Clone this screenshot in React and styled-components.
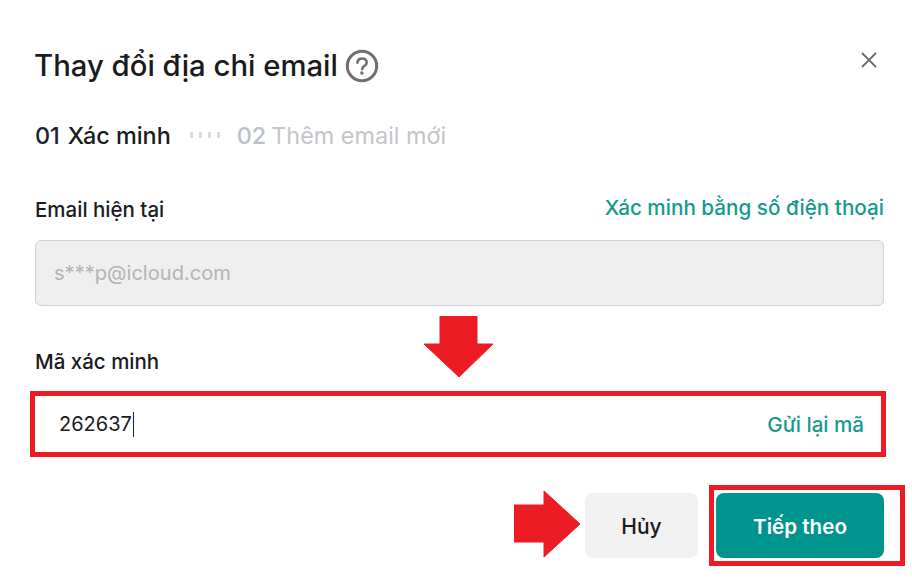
import React from 'react';
import styled, { createGlobalStyle } from 'styled-components';

const GlobalStyle = createGlobalStyle`
  html, body {
    margin: 0;
    padding: 0;
    background: #fff;
    font-family: Inter, "Noto Sans", "Liberation Sans", sans-serif;
  }
`;

const Dialog = styled.div`
  position: relative;
  box-sizing: border-box;
  width: 912px;
  height: 584px;
  padding: 44px 28px 0 35px;
  overflow: hidden;
  background: #fff;
`;

const Header = styled.div`
  display: flex;
  align-items: center;
  justify-content: space-between;
  height: 44px;
`;

const TitleRow = styled.div`
  display: flex;
  align-items: center;
  gap: 7px;
  margin-left: -1px;
`;

const Title = styled.h1`
  margin: 0;
  font-size: 29.3px;
  font-weight: 500;
  line-height: 44px;
  color: #1b1b1d;
`;

const CloseButton = styled.div`
  display: flex;
  margin-right: 7px;
  margin-top: -12px;
`;

const Steps = styled.div`
  display: flex;
  align-items: center;
  height: 30px;
  margin-top: 32px;
  font-size: 23.4px;
  font-weight: 500;
`;

const StepNumber = styled.span`
  margin-right: ${(props) => (props.$active ? 8 : 5)}px;
  color: ${(props) => (props.$active ? '#1b2238' : '#bcbfd0')};
`;

const StepLabel = styled.span`
  color: ${(props) => (props.$active ? '#1b1b1d' : '#c4c5c8')};
  font-weight: ${(props) => (props.$active ? 500 : 400)};
`;

const StepDots = styled.div`
  display: flex;
  gap: 6px;
  margin: 0 17px 0 19px;
`;

const StepDot = styled.span`
  width: 3px;
  height: 6px;
  background: #d9d9de;
`;

const LabelRow = styled.div`
  display: flex;
  align-items: center;
  justify-content: space-between;
  height: 30px;
  margin-top: ${(props) => props.$top}px;
`;

const Label = styled.span`
  font-size: 20.5px;
  font-weight: 500;
  color: #1b1b1d;
`;

const LinkText = styled.span`
  font-size: ${(props) => props.$size}px;
  font-weight: 500;
  color: #149a8f;
  margin-top: ${(props) => props.$shift || 0}px;
`;

const ReadonlyField = styled.div`
  display: flex;
  align-items: center;
  box-sizing: border-box;
  height: 66px;
  margin-top: 16px;
  padding: 0 18px;
  background: #efefef;
  border: 1px solid #d2d2d2;
  border-radius: 6px;
  font-size: 20.1px;
  color: #b4b4b4;
`;

const CodeField = styled.div`
  display: flex;
  align-items: center;
  justify-content: space-between;
  box-sizing: border-box;
  width: 856px;
  height: 66px;
  margin: 15px 0 0 -5px;
  padding: 0 17px 0 24px;
  border: 5px solid #ed1c24;
  font-size: 20px;
  color: #1b1b1d;
`;

const CodeValue = styled.div`
  display: flex;
  align-items: center;
`;

const Caret = styled.span`
  width: 1px;
  height: 25px;
  margin-left: 1px;
  background: #222;
`;

const Actions = styled.div`
  display: flex;
  justify-content: flex-end;
  gap: 18px;
  margin-top: 36px;
`;

const Button = styled.div`
  display: flex;
  align-items: center;
  justify-content: center;
  box-sizing: border-box;
  width: ${(props) => props.$width}px;
  height: 65px;
  padding-top: 2px;
  border-radius: 8px;
  font-size: ${(props) => (props.$primary ? 20.6 : 21)}px;
  font-weight: ${(props) => (props.$primary ? 600 : 500)};
  background: ${(props) => (props.$primary ? '#00948f' : '#f1f1f2')};
  color: ${(props) => (props.$primary ? '#fff' : '#1b1b1d')};
`;

const NextHighlight = styled.div`
  position: absolute;
  left: 709px;
  top: 485px;
  box-sizing: border-box;
  width: 196px;
  height: 81px;
  border: 5px solid #ed1c24;
`;

const Arrow = styled.svg`
  position: absolute;
  left: ${(props) => props.$left}px;
  top: ${(props) => props.$top}px;
`;

const HelpIcon = () => (
  <svg width="34" height="34" viewBox="0 0 34 34" fill="none">
    <circle cx="17" cy="17" r="14.7" stroke="#6f6f6f" strokeWidth="3" />
    <path
      d="M12.4 13.6c.3-2.6 2.2-4.1 4.7-4.1 2.7 0 4.6 1.6 4.6 3.9 0 1.9-1 2.9-2.5 3.8-1.3.8-1.9 1.5-1.9 2.9"
      stroke="#6f6f6f"
      strokeWidth="2.6"
      strokeLinecap="round"
    />
    <circle cx="16.9" cy="24" r="1.7" fill="#6f6f6f" />
  </svg>
);

const CloseIcon = () => (
  <svg width="16" height="16" viewBox="0 0 16 16" fill="none">
    <path d="M1 1l14 14M15 1L1 15" stroke="#6e6e6e" strokeWidth="1.8" />
  </svg>
);

const App = () => (
  <>
    <GlobalStyle />
    <Dialog>
      <Header>
        <TitleRow>
          <Title>Thay đổi địa chỉ email</Title>
          <HelpIcon />
        </TitleRow>
        <CloseButton>
          <CloseIcon />
        </CloseButton>
      </Header>

      <Steps>
        <StepNumber $active>01</StepNumber>
        <StepLabel $active>Xác minh</StepLabel>
        <StepDots>
          {[0, 1, 2, 3].map((i) => (
            <StepDot key={i} />
          ))}
        </StepDots>
        <StepNumber>02</StepNumber>
        <StepLabel>Thêm email mới</StepLabel>
      </Steps>

      <LabelRow $top={44}>
        <Label>Email hiện tại</Label>
        <LinkText $size={20.7} $shift={-3}>
          Xác minh bằng số điện thoại
        </LinkText>
      </LabelRow>
      <ReadonlyField>s***p@icloud.com</ReadonlyField>

      <LabelRow $top={40}>
        <Label>Mã xác minh</Label>
      </LabelRow>
      <CodeField>
        <CodeValue>
          262637
          <Caret />
        </CodeValue>
        <LinkText $size={20.6}>Gửi lại mã</LinkText>
      </CodeField>

      <Actions>
        <Button $width={113}>Hủy</Button>
        <Button $width={168} $primary>
          Tiếp theo
        </Button>
      </Actions>

      <NextHighlight />
      <Arrow $left={424} $top={316} width="70" height="62" viewBox="0 0 70 62">
        <path
          d="M16 0h37v28h16L35 61 0 28h16z"
          fill="#ed1c24"
          stroke="#ed1c24"
          strokeWidth="1"
          strokeLinejoin="round"
        />
      </Arrow>
      <Arrow $left={514} $top={490} width="67" height="68" viewBox="0 0 67 68">
        <path
          d="M0 15h30V1l36 33-36 33V52H0z"
          fill="#ed1c24"
          stroke="#ed1c24"
          strokeWidth="1"
          strokeLinejoin="round"
        />
      </Arrow>
    </Dialog>
  </>
);

export default App;
